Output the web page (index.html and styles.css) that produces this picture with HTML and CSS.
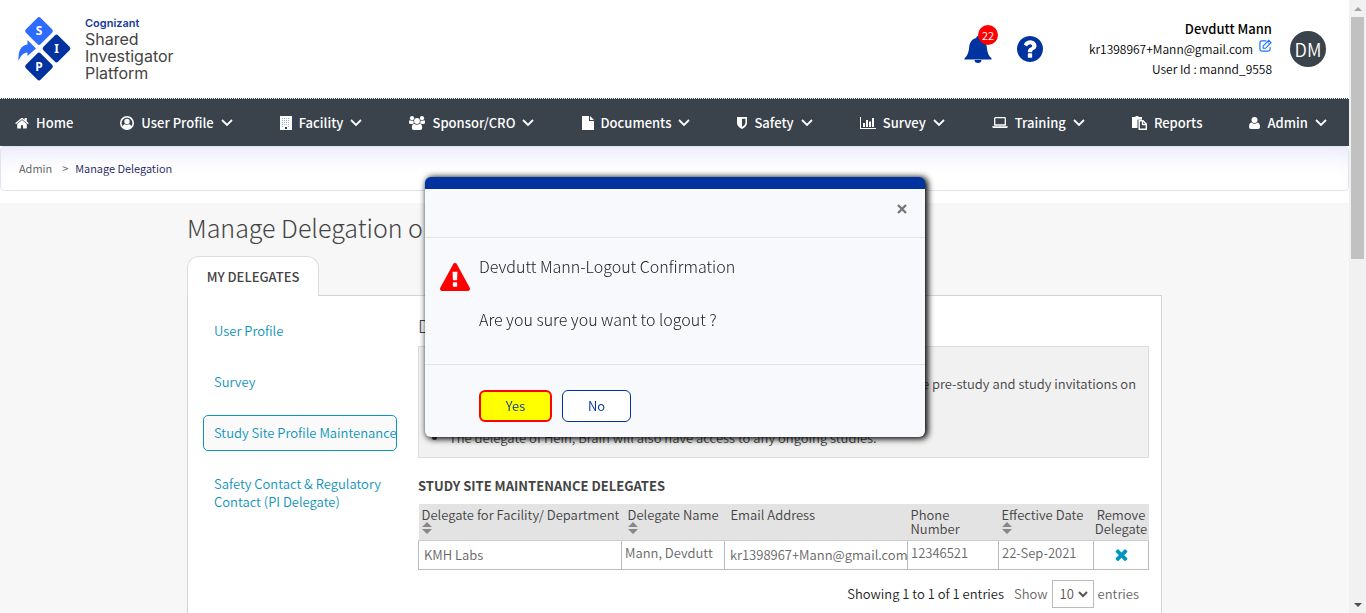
FILE: index.html
```html
<!DOCTYPE html>
<html lang="en">
<head>
<meta charset="utf-8">
<title>Manage Delegation</title>
<link rel="stylesheet" href="styles.css">
</head>
<body>
<svg class="sprite" aria-hidden="true">
  <symbol id="chevron" viewBox="0 0 12 8"><path d="M1 1L6 6L11 1" fill="none" stroke="currentColor" stroke-width="1.800"/></symbol>
  <symbol id="sort" viewBox="0 0 10 12"><path d="M0 5L5 0L10 5ZM0 7L5 12L10 7Z" fill="#888"/></symbol>
</svg>
<div class="page">
  <header class="top">
    <a class="brand" href="#">
      <svg class="brand-mark" viewBox="0 0 54 66" aria-hidden="true">
        <rect x="10.500" y="4.500" width="21" height="21" rx="2.500" transform="rotate(45 21 15)" fill="#2e6bff"/>
        <rect x="28" y="22" width="21" height="21" rx="2.500" transform="rotate(45 38.500 32.500)" fill="#0033a0"/>
        <rect x="10.500" y="40" width="21" height="21" rx="2.500" transform="rotate(45 21 50.500)" fill="#0033a0"/>
        <path d="M.5 45C0 35 3 29 9.500 28.500V24L18 32.500L9.500 40V36.500C5 37 2.500 40 .5 45Z" fill="#2e6bff"/>
        <g class="brand-letters"><text x="21" y="19">S</text><text x="38.500" y="37">I</text><text x="21" y="55">P</text></g>
      </svg>
      <span class="brand-text"><b>Cognizant</b><span>Shared</span><span>Investigator</span><span>Platform</span></span>
    </a>
    <div class="account">
      <button class="bell" aria-label="Notifications">
        <svg viewBox="0 0 28 28" width="28" height="28"><path d="M14 1C15 1 15.700 1.700 15.700 3C20.500 4 22.500 8 22.800 12C23.200 17 24.500 21 27.500 23.300V24.500H.5V23.300C3.500 21 4.800 17 5.200 12C5.500 8 7.500 4 12.300 3C12.300 1.700 13 1 14 1ZM10.500 25H17.500A3.500 3 0 0 1 10.500 25Z" fill="#0033a0"/></svg>
        <span class="badge">22</span>
      </button>
      <button class="help" aria-label="Help"><svg viewBox="128 128 1536 1536" width="26" height="26"><path fill="#0033a0" d="M1024 1376v-192q0-14-9-23t-23-9h-192q-14 0-23 9t-9 23v192q0 14 9 23t23 9h192q14 0 23-9t9-23zm256-672q0-88-55.500-163t-138.500-116-170-41q-243 0-371 213-15 24 8 42l132 100q7 6 19 6 16 0 25-12 53-68 86-92 34-24 86-24 48 0 85.500 26t37.500 59q0 38-20 61t-68 45q-63 28-115.500 86.500t-52.500 125.500v36q0 14 9 23t23 9h192q14 0 23-9t9-23q0-19 21.500-49.500t54.500-49.500q32-18 49-28.500t46-35 44.500-48 28-60.500 12.500-81zm384 192q0 209-103 385.500t-279.500 279.500-385.500 103-385.500-103-279.500-279.500-103-385.500 103-385.500 279.500-279.500 385.500-103 385.500 103 279.500 279.500 103 385.500z"/></svg></button>
      <div class="who">
        <strong>Devdutt Mann</strong>
        <span class="mail">kr1398967+Mann@gmail.com <a href="#" aria-label="Edit profile"><svg viewBox="0 0 14 14" width="13" height="13"><path d="M8 2H3Q1 2 1 4V11Q1 13 3 13H10Q12 13 12 11V9" fill="none" stroke="#1a73ff" stroke-width="1.300"/><path d="M4.500 10V7.500L10.500 1.500L13 4L7 10Z" fill="#fff" stroke="#1a73ff" stroke-width="1.200"/><path d="M9 3L11.500 5.500" stroke="#1a73ff"/></svg></a></span>
        <span>User Id : mannd_9558</span>
      </div>
      <button class="avatar">DM</button>
    </div>
  </header>

  <nav class="menu">
    <a href="#"><svg viewBox="53 200 1686 1340" width="14" height="12"><path fill="#fff" d="M1472 992v480q0 26-19 45t-45 19h-384v-384h-256v384h-384q-26 0-45-19t-19-45v-480q0-1 .5-3t.5-3l575-474 575 474q1 2 1 6zm223-69l-62 74q-8 9-21 11h-3q-13 0-21-7l-692-577-692 577q-12 8-24 7-13-2-21-11l-62-74q-8-10-7-23.500t11-21.500l719-599q32-26 76-26t76 26l244 204v-195q0-14 9-23t23-9h192q14 0 23 9t9 23v408l219 182q10 8 11 21.500t-7 23.500z"/></svg>Home</a>
    <a href="#"><svg viewBox="0 0 14 14" width="14" height="14"><circle cx="7" cy="7" r="6.200" fill="none" stroke="#fff" stroke-width="1.600"/><circle cx="7" cy="5.500" r="2.700" fill="#fff"/><path d="M2.500 11.500Q3.200 8 5 8.200Q7 9.500 9 8.200Q10.800 8 11.500 11.500Q7 15 2.500 11.500Z" fill="#fff"/></svg>User Profile<svg class="chev"><use href="#chevron"/></svg></a>
    <a href="#"><svg viewBox="0 0 12 14" width="12" height="14"><path d="M0 0H12V14H0Z" fill="#fff"/><path d="M2 2.500H10M2 4.500H10M2 6.500H10M2 8.500H10M2 10.500H4M8 10.500H10" stroke="#8fb6cc" stroke-dasharray="1 1"/><path d="M5 11H7V13H5Z" fill="#3a424b"/></svg>Facility<svg class="chev"><use href="#chevron"/></svg></a>
    <a href="#"><svg viewBox="0 0 16 14" width="16" height="14"><g fill="#fff"><circle cx="3" cy="2.200" r="2.100"/><circle cx="13" cy="2.200" r="2.100"/><path d="M0 5.500Q0 4 1.500 4.400Q3 5.200 4.500 4.600Q4.300 6 5 7.200Q4 7.500 3.500 8H1.500Q0 8 0 6.500ZM16 5.500Q16 4 14.500 4.400Q13 5.200 11.500 4.600Q11.700 6 11 7.200Q12 7.500 12.500 8H14.500Q16 8 16 6.500Z"/><circle cx="8" cy="5" r="2.900"/><path d="M2.800 11.500Q3 8 5.300 7.700Q8 9.700 10.700 7.700Q13 8 13.200 11.500Q13.200 14 11.200 14H4.800Q2.800 14 2.800 11.500Z"/></g></svg>Sponsor/CRO<svg class="chev"><use href="#chevron"/></svg></a>
    <a href="#"><svg viewBox="0 0 12 14" width="12" height="14"><path d="M0 0H7V5H12V14H0ZM8 0L12 4H8Z" fill="#fff"/></svg>Documents<svg class="chev"><use href="#chevron"/></svg></a>
    <a href="#"><svg viewBox="0 0 10 12" width="10" height="12"><path d="M0 0H10V6Q10 9.500 5 12Q0 9.500 0 6ZM5 1.700V10Q8.400 8 8.400 6V1.700Z" fill="#fff" fill-rule="evenodd"/></svg>Safety<svg class="chev"><use href="#chevron"/></svg></a>
    <a href="#"><svg viewBox="0 0 16 12" width="16" height="12"><path d="M0 0H1V11H16V12H0ZM3 6H5V10H3ZM6 3H8V10H6ZM9 4.500H11V10H9ZM12 1H14V10H12Z" fill="#fff"/></svg>Survey<svg class="chev"><use href="#chevron"/></svg></a>
    <a href="#"><svg viewBox="0 0 16 11" width="16" height="11"><path d="M2.700 8V1.500Q2.700.7 3.500.7H12.500Q13.300.7 13.300 1.500V8Z" fill="none" stroke="#fff" stroke-width="1.300"/><path d="M0 9.200H16Q16 11 14.500 11H1.500Q0 11 0 9.200Z" fill="#fff"/></svg>Training<svg class="chev"><use href="#chevron"/></svg></a>
    <a href="#"><svg viewBox="0 0 15 14" width="15" height="14"><path d="M0 1H3Q3.500 0 5 0T7 1H10V3.800H5.500V12H0Z" fill="#fff"/><path d="M7.200 4.700H11L14.300 8V13.300H7.200Z" fill="none" stroke="#fff" stroke-width="1.400"/><path d="M10.500 5V8.500H14.300" fill="none" stroke="#fff" stroke-width="1.300"/></svg>Reports</a>
    <a href="#"><svg viewBox="0 0 11 12" width="11" height="12"><circle cx="5.500" cy="3" r="3" fill="#fff"/><path d="M0 10Q0 6 2.600 5.600Q5.500 8 8.400 5.600Q11 6 11 10Q11 12 9 12H2Q0 12 0 10Z" fill="#fff"/></svg>Admin<svg class="chev"><use href="#chevron"/></svg></a>
  </nav>

  <nav class="crumbs" aria-label="Breadcrumb"><a href="#">Admin</a><i>&gt;</i><a class="here" href="#">Manage Delegation</a></nav>

  <main class="main">
    <div class="wrap">
      <h1>Manage Delegation on</h1>
      <button class="tab">MY DELEGATES</button>
      <div class="panel">
        <nav class="side">
          <a href="#">User Profile</a>
          <a href="#">Survey</a>
          <a class="on" href="#">Study Site Profile Maintenance</a>
          <a href="#">Safety Contact &amp; Regulatory Contact (PI Delegate)</a>
        </nav>
        <section class="content">
          <h2>D</h2>
          <ul class="notes">
            <li class="first">receive pre-study and study invitations on</li>
            <li>The delegate of Hein, Brain will also have access to any ongoing studies.</li>
          </ul>
          <h3>STUDY SITE MAINTENANCE DELEGATES</h3>
          <table>
            <colgroup><col class="c1"><col class="c2"><col class="c3"><col class="c4"><col class="c5"><col class="c6"></colgroup>
            <thead><tr>
              <th class="line">Delegate for Facility/ Department<svg class="sort"><use href="#sort"/></svg></th>
              <th class="inset">Delegate Name<svg class="sort"><use href="#sort"/></svg></th>
              <th class="inset">Email Address</th>
              <th>Phone Number</th>
              <th class="line">Effective Date<svg class="sort"><use href="#sort"/></svg></th>
              <th class="mid">Remove Delegate</th>
            </tr></thead>
            <tbody><tr>
              <td class="low">KMH Labs</td><td>Mann, Devdutt</td><td class="low">kr1398967+Mann@gmail.com</td><td>12346521</td><td>22-Sep-2021</td>
              <td class="mid"><button class="remove" aria-label="Remove delegate"><svg viewBox="302 238 1188 1316" width="13" height="13"><path fill="#0096bd" d="M1490 1322q0 40-28 68l-136 136q-28 28-68 28t-68-28l-294-294-294 294q-28 28-68 28t-68-28l-136-136q-28-28-28-68t28-68l294-294-294-294q-28-28-28-68t28-68l136-136q28-28 68-28t68 28l294 294 294-294q28-28 68-28t68 28l136 136q28 28 28 68t-28 68l-294 294 294 294q28 28 28 68z"/></svg></button></td>
            </tr></tbody>
          </table>
          <div class="pager">
            <span class="count">Showing 1 to 1 of 1 entries</span>
            <label for="size">Show</label>
            <span class="pick"><select id="size"><option>10</option></select><svg viewBox="0 0 10 7" width="10" height="7"><path d="M1 1L5 5L9 1" fill="none" stroke="#555" stroke-width="2"/></svg></span>
            <span>entries</span>
          </div>
        </section>
      </div>
    </div>
  </main>
</div>

<div class="scroll" aria-hidden="true"><span class="up"></span><span class="thumb"></span><span class="down"></span></div>

<div class="overlay">
  <div class="modal" role="dialog" aria-label="Logout Confirmation">
    <div class="modal-head"><button class="close" aria-label="Close"><svg viewBox="0 0 10 10" width="10" height="10"><path d="M1 1L9 9M9 1L1 9" stroke="#777" stroke-width="2.400"/></svg></button></div>
    <div class="modal-body">
      <svg class="warn" viewBox="0 0 1792 1664" width="30" height="28" aria-hidden="true"><path fill="#f00" d="M1024 1375v-190q0-14-9.500-23.500t-22.500-9.500h-192q-13 0-22.500 9.500t-9.500 23.500v190q0 14 9.500 23.500t22.500 9.500h192q13 0 22.500-9.500t9.500-23.500zm-2-374l18-459q0-12-10-19-13-11-24-11h-220q-11 0-24 11-10 7-10 21l17 457q0 10 10 16.500t24 6.500h185q14 0 23.500-6.500t10.500-16.500zm-14-934l768 1408q35 63-2 126-17 29-46.500 46t-63.500 17h-1536q-34 0-63.500-17t-46.500-46q-37-63-2-126l768-1408q17-31 47-49t65-18 65 18 47 49z"/></svg>
      <div class="ask"><p>Devdutt Mann-Logout Confirmation</p><p>Are you sure you want to logout ?</p></div>
    </div>
    <div class="modal-foot"><button class="yes">Yes</button><button class="no">No</button></div>
  </div>
</div>
</body>
</html>
```
FILE: styles.css
```css
* { box-sizing: border-box; }
body {
  margin: 0;
  display: flex;
  min-height: 100vh;
  font-family: "Noto Sans CJK SC", "Noto Sans", sans-serif;
  font-size: 13px;
  font-weight: 350;
  line-height: 18px;
  color: #444;
  background: #fff;
}
a { color: inherit; text-decoration: none; }
button { font: inherit; border: 0; padding: 0; background: none; cursor: pointer; }
svg { display: block; flex: none; }
h1, h2, h3, p, ul { margin: 0; padding: 0; }
.sprite { position: absolute; width: 0; height: 0; }
.page { flex: 1; min-width: 0; display: flex; flex-direction: column; }

.top { display: flex; justify-content: space-between; height: 98px; padding: 0 23px 0 18px; }
.brand { display: flex; gap: 13px; padding-top: 16px; }
.brand-mark { width: 54px; height: 66px; }
.brand-letters { font: bold 12px "Noto Sans"; fill: #fff; text-anchor: middle; }
.brand-text { display: flex; flex-direction: column; font: 16px/17px "Inter", sans-serif; color: #444; }
.brand-text b { font-size: 11px; line-height: 15px; font-weight: 600; color: #1a3a9c; }
.account { display: flex; align-items: center; color: #000; }
.bell { position: relative; margin-right: 25px; }
.badge { position: absolute; top: -10px; right: -6px; width: 20px; height: 20px; border-radius: 50%; background: #f00; color: #fff; font-size: 11px; line-height: 20px; }
.help { margin-right: 46px; }
.who { display: flex; flex-direction: column; text-align: right; font-size: 12px; line-height: 20px; margin-right: 18px; }
.who strong { font-size: 13px; font-weight: 500; }
.mail { display: flex; justify-content: flex-end; gap: 6px; }
.avatar { width: 36px; height: 36px; border-radius: 50%; background: #3a424b; color: #fff; font-size: 18px; }

.menu { display: flex; justify-content: space-between; align-items: center; height: 48px; padding: 0 22px 0 15px; background: #3a424b; border-top: 1px dotted #fff; color: #fff; font-weight: 500; }
.menu a { display: flex; align-items: center; gap: 7px; }
.chev { width: 12px; height: 8px; }

.crumbs { display: flex; height: 45px; align-items: center; padding: 0 18px 2px; border: 1px solid #e0e4f0; border-radius: 4px; box-shadow: inset 0 20px 24px -14px #e6e6fa; font-size: 11px; color: #555; }
.crumbs i { font-style: normal; margin: 0 7px 0 10px; }
.crumbs .here { color: #1a1a5a; }

.main { flex: 1; display: flex; justify-content: center; margin-top: 12px; padding-top: 6px; background: #f7f7f7; }
.wrap { width: 975px; display: flex; flex-direction: column; align-items: flex-start; }
h1 { font-size: 25px; line-height: 36px; font-weight: 300; color: #444; }
.tab { width: 132px; height: 40px; margin-top: 11px; background: #fff; border: 1px solid #ddd; border-bottom: 0; border-radius: 12px 12px 0 0; font-weight: 500; color: #444; z-index: 1; }
.panel { flex: 1; align-self: stretch; display: flex; gap: 21px; margin-top: -1px; padding: 0 12px 0 15px; background: #fff; border: 1px solid #d4d4d4; border-bottom: 0; }
.side { width: 194px; flex: none; padding-top: 17px; display: flex; flex-direction: column; gap: 15px; color: #0d94ba; }
.side a { padding: 8px 10px; border: 1px solid transparent; border-radius: 5px; white-space: nowrap; }
.side a:last-child { white-space: normal; padding-right: 0; }
.side .on { border-color: #0d94ba; background: #fafafa; padding-right: 0; }
.content { flex: 1; min-width: 0; }
h2 { font-size: 18px; line-height: 26px; font-weight: 300; margin-top: 16px; }
.notes { margin-top: 8px; height: 112px; padding: 28px 12px 0 30px; border: 1px solid #ddd; background: #f1f1f1; }
.notes .first { text-align: right; margin-bottom: 36px; }
h3 { font-size: 13px; line-height: 18px; font-weight: 700; margin: 19px 0 9px; }
table { width: 100%; border-collapse: collapse; table-layout: fixed; }
.c1 { width: 203px; } .c2 { width: 103px; } .c3 { width: 183px; } .c4 { width: 91px; } .c6 { width: 55px; }
th { font-weight: 350; text-align: left; vertical-align: top; line-height: 14px; background: #e3e3e3; padding: 4px 3px; border-bottom: 1px solid #ccc; }
th.inset { padding: 4px 0 4px 6px; }
th.line { white-space: nowrap; }
th.mid, td.mid { text-align: center; padding-left: 0; padding-right: 0; }
.sort { width: 10px; height: 12px; }
td { height: 29px; padding: 3px 3px 7px; border: 1px solid #bbb; color: #666; }
td.low { padding: 5px 0 5px 5px; }
.remove { display: inline-block; vertical-align: middle; }
.pager { display: flex; align-items: center; justify-content: flex-end; gap: 4px; margin: 10px 10px 5px 0; color: #666; }
.count { color: #222; margin-right: 6px; }
.pick { display: grid; align-items: center; border: 1px solid #bbb; width: 42px; height: 28px; }
.pick select, .pick svg { grid-area: 1 / 1; }
.pick select { appearance: none; border: 0; background: none; font: inherit; color: #555; padding: 0 7px; width: 100%; height: 100%; }
.pick svg { justify-self: end; margin-right: 5px; pointer-events: none; }

.scroll { width: 17px; height: 100vh; position: sticky; top: 0; background: #f1f1f1; display: flex; flex-direction: column; align-items: center; }
.up, .down { border: 4px solid transparent; }
.up { border-bottom-color: #a3a3a3; margin: 3px 0 6px; }
.down { border-top-color: #505050; margin: auto 0 2px; }
.thumb { width: 13px; height: 242px; background: #c1c1c1; }

.overlay { position: fixed; inset: 0 16px 0 0; display: flex; justify-content: center; align-items: flex-start; padding-top: 177px; }
.modal { width: 500px; background: #f8f9fc; border-top: 12px solid #0033a0; border-radius: 6px; box-shadow: 2px 1px 6px 1px #000; }
.modal-head { display: flex; justify-content: flex-end; padding: 15px 18px 23px; border-bottom: 1px solid #e0e4ea; }
.close { height: 10px; }
.modal-body { display: flex; gap: 9px; padding: 15px 15px 32px; border-bottom: 1px solid #e0e4ea; }
.warn { margin-top: 10px; }
.ask { display: grid; gap: 27px; font-size: 16px; line-height: 26px; font-weight: 300; color: #222; }
.modal-foot { display: flex; gap: 10px; padding: 25px 54px 15px; }
.yes, .no { height: 32px; border-radius: 6px; color: #0033a0; }
.yes { width: 73px; background: #ff0; border: 2px solid #f00; }
.no { width: 69px; background: #fff; border: 1px solid #0033a0; }
```
